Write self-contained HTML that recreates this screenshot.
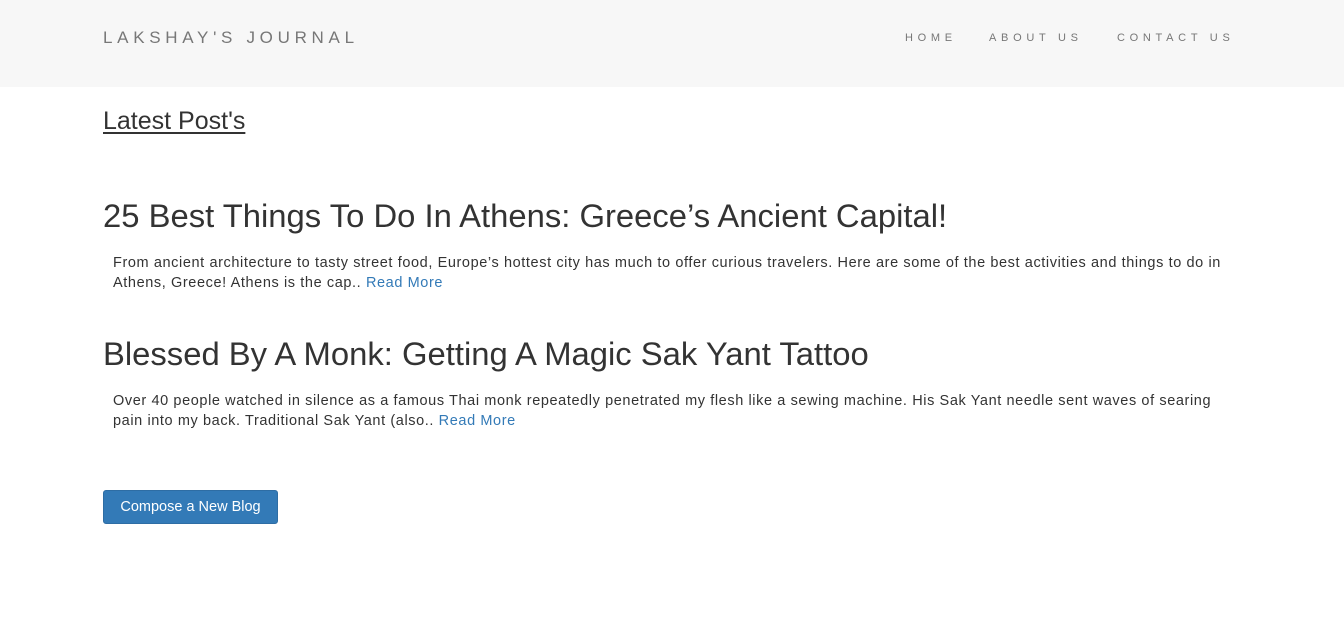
<!DOCTYPE html>
<html><head><meta charset="utf-8"><style>
body{margin:0;width:1344px;height:620px;background:#fff;font-family:"Liberation Sans",sans-serif;color:#333;position:relative;overflow:hidden}
.nav{position:absolute;left:0;top:0;width:1344px;height:87px;background:#f7f7f7}
.brand{position:absolute;left:103px;top:28px;font-size:17px;letter-spacing:4.7px;color:#777;white-space:nowrap}
.nl{position:absolute;top:32px;font-size:11px;letter-spacing:4.7px;color:#777;white-space:nowrap}
.a{position:absolute;white-space:nowrap}
.p{position:absolute;left:113px;font-size:14.5px;line-height:20px;color:#333;white-space:nowrap;letter-spacing:0.6px}
.p span{color:#337ab7}
.btn{position:absolute;left:103px;top:490px;width:173px;height:32px;background:#337ab7;border:1px solid #2e6da4;border-radius:3px;color:#fff;font-size:14.5px;line-height:32px;text-align:center}
</style></head><body>
<div class="nav">
<div class="brand">LAKSHAY'S JOURNAL</div>
<div class="nl" style="left:905px">HOME</div>
<div class="nl" style="left:989px">ABOUT US</div>
<div class="nl" style="left:1117px">CONTACT US</div>
</div>
<div class="a" style="left:103px;top:107px;font-size:25px;text-decoration:underline;text-underline-offset:3px">Latest Post's</div>
<div class="a" style="left:103px;top:197px;font-size:32.8px">25 Best Things To Do In Athens: Greece’s Ancient Capital!</div>
<div class="p" style="top:253px">From ancient architecture to tasty street food, Europe’s hottest city has much to offer curious travelers. Here are some of the best activities and things to do in<br>Athens, Greece! Athens is the cap.. <span>Read More</span></div>
<div class="a" style="left:103px;top:335px;font-size:32.8px">Blessed By A Monk: Getting A Magic Sak Yant Tattoo</div>
<div class="p" style="top:391px">Over 40 people watched in silence as a famous Thai monk repeatedly penetrated my flesh like a sewing machine. His Sak Yant needle sent waves of searing<br>pain into my back. Traditional Sak Yant (also.. <span>Read More</span></div>
<div class="btn">Compose a New Blog</div>
</body></html>
